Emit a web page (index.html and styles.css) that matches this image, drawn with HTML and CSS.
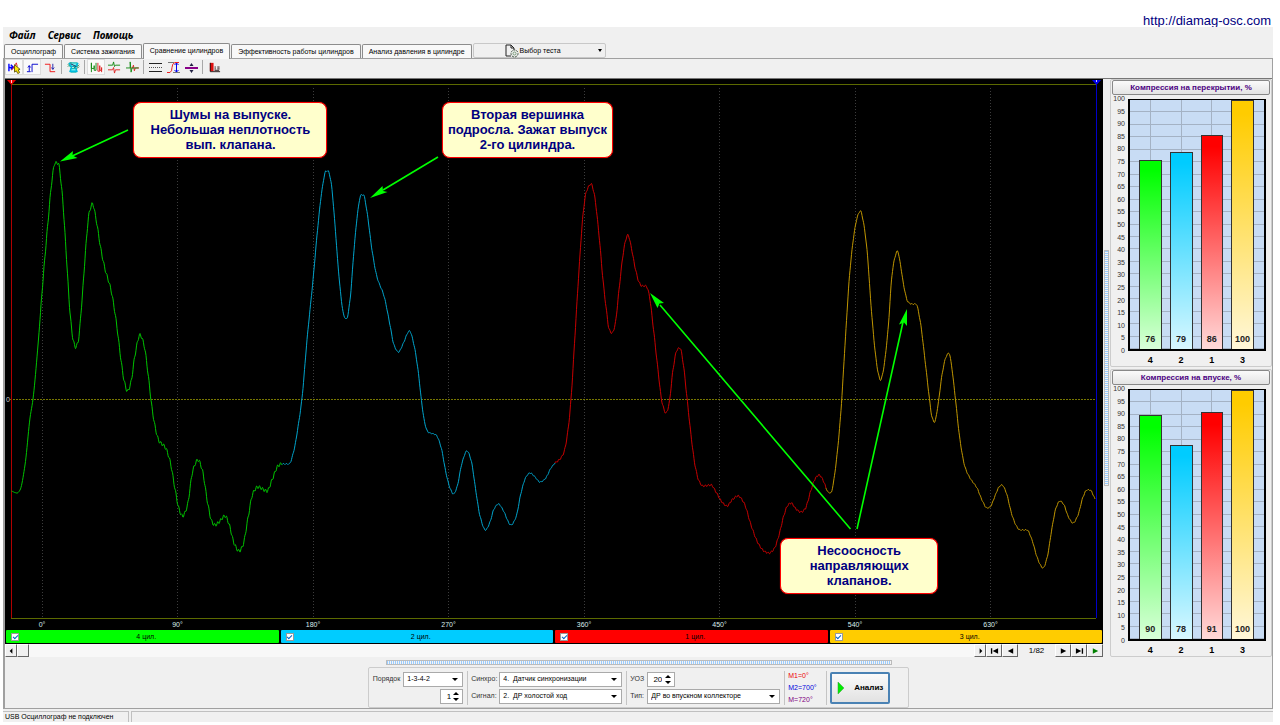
FILE: index.html
```html
<!DOCTYPE html>
<html lang="ru">
<head>
<meta charset="utf-8">
<title>Осциллограф</title>
<link rel="stylesheet" href="styles.css">
</head>
<body>
<header class="site"><a href="#site">http://diamag-osc.com</a></header>
<div class="app">
  <nav class="menu"><button>Файл</button><button>Сервис</button><button>Помощь</button></nav>
  <div class="tabs">
    <button class="tab">Осциллограф</button>
    <button class="tab">Система зажигания</button>
    <button class="tab active">Сравнение цилиндров</button>
    <button class="tab">Эффективность работы цилиндров</button>
    <button class="tab">Анализ давления в цилиндре</button>
    <button class="test-pick">
      <svg width="14" height="14" viewBox="0 0 14 14" fill="none" stroke="#222"><path d="M1 12V1h5l3 3v2M6 1v3h3M1 12h5"/><circle cx="9.500" cy="9.500" r="3.500" stroke="#3c503c" stroke-dasharray="2 1"/><circle cx="9.500" cy="9.500" r="1.500" stroke="#789a78"/></svg>
      <span>Выбор теста</span><i class="caret"></i>
    </button>
  </div>

  <div class="frame">
    <div class="toolbar">
      <button class="tool pressed" aria-label="Курсор"><svg viewBox="0 0 14 14" fill="none"><path d="M1 3v8M1 7h4M3 4l3 3-3 2" stroke="#00f" stroke-width="1.500"/><path d="M4 10l5-8 1 4" stroke="#d22"/><path d="M7 4l6 5-2 .5 1.500 3-2 1-1.500-3L7 12z" fill="#fe0" stroke="#651"/></svg></button>
      <button class="tool pressed" aria-label="Передний фронт"><svg viewBox="0 0 14 14" fill="none" stroke="#00c"><path d="M6.500 12V3.500H13M1 11.500h4"/><path d="M3.500 11V5M2 7l1.500-2L5 7"/></svg></button>
      <button class="tool" aria-label="Задний фронт"><svg viewBox="0 0 14 14" fill="none" stroke="#e11"><path d="M1 3.500h5.500v8H12"/><path d="M9.500 3v6M8 7l1.500 2L11 7" stroke="#22a"/></svg></button>
      <span class="sep"></span>
      <button class="tool" aria-label="Наложение"><svg viewBox="0 0 14 14" fill="none" stroke="#0aa"><path d="M1 4q3-4 6 0t6 0M1 6q3-4 6 0t6 0" stroke="#168040"/><path d="M3 2h8v4H3zM4 8h6v4H4z" fill="#7ee"/><path d="M2 2l3 4-2 6M12 2L9 6l2 6M4 11h6" stroke="#0bd" stroke-width="1.500"/><path d="M4 3l6 3" stroke="#225"/></svg></button>
      <span class="sep"></span>
      <button class="tool pressed" aria-label="Последовательно"><svg viewBox="0 0 14 14" fill="none"><path d="M1.500 12V2v6h3V5v5h2V2" stroke="#181"/><path d="M8.500 2v9h2V5v5h2V7v5" stroke="#d22"/></svg></button>
      <button class="tool" aria-label="Друг под другом"><svg viewBox="0 0 14 14" fill="none"><path d="M0 4.500h5L6 1l1 5 1-1.500h5" stroke="#181"/><path d="M0 9.500h5L6 7l1 6 1-3.500h5" stroke="#d22"/></svg></button>
      <button class="tool" aria-label="Совместить"><svg viewBox="0 0 14 14" fill="none"><path d="M5 7.500h2l1-3 1 6 1-3h4" stroke="#d22"/><path d="M0 7.500h4.500V1l1 11 1-4.500h7" stroke="#181"/></svg></button>
      <span class="sep"></span>
      <button class="tool" aria-label="Линии"><svg viewBox="0 0 13 13" stroke="#222"><path d="M0 2.500h13M0 10.500h13"/><path d="M0 6.500h13" stroke="#555" stroke-dasharray="1 1"/></svg></button>
      <button class="tool" aria-label="Масштаб"><svg viewBox="0 0 13 13" fill="none"><path d="M0 11.500h3q2-1 2-5t3-5h4" stroke="#e22"/><path d="M1 1.500h6M6 11.500h7" stroke="#777"/><path d="M9.500 2v9M7.500 4l2-2 2 2M7.500 9l2 2 2-2" stroke="#00e"/></svg></button>
      <button class="tool" aria-label="Ноль"><svg viewBox="0 0 13 13"><path d="M0 6h13v2H0z" fill="#808"/><path d="M6.500 2l2 3h-4zM6.500 12l2-3h-4z" fill="#224"/></svg></button>
      <span class="sep"></span>
      <button class="tool" aria-label="Отчёт"><svg viewBox="0 0 14 14"><path d="M2 2h4v9H2z" fill="#d11"/><path d="M2.500 2v9.500H13M7 6.500h1.500M7 8.500h1.500M10 6.500h2.500M10 8.500h2.500M7 10h5" fill="none" stroke="#211"/></svg></button>
    </div>

    <main class="work">
      <section class="osc">
        <div class="scope">
          <svg class="plot" viewBox="5 79 1098 550" preserveAspectRatio="none" fill="none">
            <g shape-rendering="crispEdges">
              <g stroke="#3c3c3c" stroke-dasharray="1 2"><path d="M42.500 88V618M177.500 88V618M313.500 88V618M448.500 88V618M584.500 88V618M719.500 88V618M855.500 88V618M990.500 88V618"/></g>
              <path d="M11 84.500H1096M11 618.500H1096" stroke="#5c6a00"/>
              <path d="M10 399.500H1096" stroke="#777700" stroke-dasharray="2 1"/>
              <path d="M11.500 80V618" stroke="#b00000"/>
              <path d="M1096.500 80V618" stroke="#0000c8"/>
            </g>
            <path d="M7 80h9l-4.500 5z" fill="#e00"/><path d="M1092 80h9l-4.500 5z" fill="#00e"/>
            <path d="M11.500 80v3" stroke="#fcc"/><path d="M1096.500 80v2" stroke="#ccf"/>
            <g id="traces"></g>
            <g stroke="#00ff00" stroke-width="1.600"><path d="M128 130L70 157M438 157L383 190M850.500 529L660 305M857 529L903 322"/></g>
            <g fill="#00ff00"><path d="M60 161.500l13-10.500-.5 4.500 5 2.500z"/><path d="M370 198l12.500-12 .5 5 4.500 1z"/><path d="M650 293l14 10-4.500.5-2 4.500z"/><path d="M907 309l0 17-3-3.500-5 2z"/></g>
          </svg>
          <div class="note noise">Шумы на выпуске.<br>Небольшая неплотность<br>вып. клапана.</div>
          <div class="note second">Вторая вершинка<br>подросла. Зажат выпуск<br>2-го цилиндра.</div>
          <div class="note guides">Несоосность<br>направляющих<br>клапанов.</div>
          <span class="zero">0</span>
          <div class="degrees" id="degrees"></div>
        </div>
        <div class="cylinders">
          <label class="cyl green"><input type="checkbox" checked><span>4 цил.</span></label>
          <label class="cyl blue"><input type="checkbox" checked><span>2 цил.</span></label>
          <label class="cyl red"><input type="checkbox" checked><span>1 цил.</span></label>
          <label class="cyl gold"><input type="checkbox" checked><span>3 цил.</span></label>
        </div>
        <div class="scroller">
          <button aria-label="Влево"><svg viewBox="0 0 10 8"><path d="M6 1v6L3 4z"/></svg></button><button class="thumb" aria-label="Ползунок"></button>
          <span class="track"></span>
          <button aria-label="Вправо"><svg viewBox="0 0 10 8"><path d="M4 1v6l3-3z"/></svg></button>
          <button class="wide" aria-label="Первый"><svg viewBox="0 0 10 8"><path d="M1 1h1.500v6H1zM9 1v6L3 4z"/></svg></button>
          <button class="wide" aria-label="Назад"><svg viewBox="0 0 10 8"><path d="M8 1v6L2 4z"/></svg></button>
          <output>1/82</output>
          <button class="wide" aria-label="Вперёд"><svg viewBox="0 0 10 8"><path d="M2 1v6l6-3z"/></svg></button>
          <button class="wide" aria-label="Последний"><svg viewBox="0 0 10 8"><path d="M1 1v6l6-3zM7.500 1H9v6H7.500z"/></svg></button>
          <button class="wide play" aria-label="Пуск"><svg viewBox="0 0 10 8"><path d="M2 1v6l6-3z"/></svg></button>
        </div>
      </section>
      <div class="v-split"><i></i></div>
      <aside class="charts">
        <section class="chart">
          <h2>Компрессия на перекрытии, %</h2>
          <div class="chart-body">
            <div class="scale"></div>
            <div class="bars">
              <div class="col"><div class="bar green" style="height:76%">76</div></div>
              <div class="col"><div class="bar blue" style="height:79%">79</div></div>
              <div class="col"><div class="bar red" style="height:86%">86</div></div>
              <div class="col"><div class="bar gold" style="height:100%">100</div></div>
            </div>
            <div class="names"><span>4</span><span>2</span><span>1</span><span>3</span></div>
          </div>
        </section>
        <section class="chart">
          <h2>Компрессия на впуске, %</h2>
          <div class="chart-body">
            <div class="scale"></div>
            <div class="bars">
              <div class="col"><div class="bar green" style="height:90%">90</div></div>
              <div class="col"><div class="bar blue" style="height:78%">78</div></div>
              <div class="col"><div class="bar red" style="height:91%">91</div></div>
              <div class="col"><div class="bar gold" style="height:100%">100</div></div>
            </div>
            <div class="names"><span>4</span><span>2</span><span>1</span><span>3</span></div>
          </div>
        </section>
      </aside>
    </main>

    <footer class="bottom">
      <div class="h-split"><i></i></div>
      <form class="panel">
        <div class="group order">
          <div class="row"><label for="order">Порядок</label><span class="pick"><select id="order"><option>1-3-4-2</option></select></span></div>
          <div class="row end"><span class="spin"><input type="number" value="1" aria-label="Цилиндр"></span></div>
        </div>
        <div class="group source">
          <label for="sync">Синхро:</label><span class="pick"><select id="sync"><option>4. &nbsp;Датчик синхронизации</option></select></span>
          <label for="signal">Сигнал:</label><span class="pick"><select id="signal"><option>2. &nbsp;ДР холостой ход</option></select></span>
        </div>
        <div class="group kind">
          <label for="uoz">УОЗ</label><span class="spin"><input id="uoz" type="number" value="20"></span>
          <label for="type">Тип:</label><span class="pick"><select id="type"><option>ДР во впускном коллекторе</option></select></span>
        </div>
        <div class="group marks"><span class="m1">M1=0°</span><span class="m2">M2=700°</span><span class="m3">M=720°</span></div>
        <div class="group"><button type="button" class="run"><svg width="8" height="14" viewBox="0 0 8 14"><path d="M1 1l6 6-6 6z" fill="#0e0" stroke="#393" stroke-width=".5"/></svg><span>Анализ</span></button></div>
      </form>
    </footer>
  </div>
  <div class="status"><span>USB Осциллограф не подключен</span><span></span></div>
</div>
<script src="traces.js"></script>
</body>
</html>
```
FILE: traces.js
```js
// Recorded pressure curves: [x, y] key points, colour and ripple height per cylinder.
const traces = [
  { color: '#00c400', ripple: 1.6, d: '11.5,491 17,493 20,490 25,465 30,418 33,399 38,345 43,280 48,222 52,180 55,163 58,163 62,192 66,250 70,312 73,339 75.5,347 78,342 82,300 86,245 89,214 92.5,204 96,219 101,250 105,269 111,290 116,320 121,360 124,380 127.5,391 131,382 135,355 140,335 144,345 149,382 152,408 156,431 159,441 165,447 170,461 175,489 179,509 182.5,516 187,507 193,470 198,460 202,469 208,505 212,522 215,525 219,522 225,516 229,524 234,543 239,551 243,545 248,518 253,493 258,487 267,491 272,480 278,466 282,463.5' },
  { color: '#00a4cc', ripple: 0.5, d: '282,464 289,464 294,450 298,427 302,398 307,340 313,280 318,225 322,190 326,171 328,171 331,182 335,225 338,265 342,305 344,316 346.5,319 350,300 354,250 358,210 361,195 363.5,195 367,212 372,250 377,277 384,296 390,325 394,345 398.5,352 403,344 409.5,331 414,345 418,370 422,405 425,424 428,432 436,435 441,447 446,473 450,488 453.5,494 457,487 462,463 467,451 471,460 476,492 480,516 485.5,530 490,522 494,509 498.5,504 503,510 511,525 516,517 521,493 526,477 530,473 535,477 540,482 545,479 551,468 555,463' },
  { color: '#c80000', ripple: 0.9, d: '555,463 560,459 564,452 568,430 571,399 575,335 579,270 583,215 586,193 589,186 591,184 594,193 599,235 603,280 607,315 609,329 612,333 615,325 619,290 623,255 626,239 628,235 631,246 635,267 639,282 642,286 646,286 649,294 653,325 658,370 662,402 666,413 669,404 673,370 677,350 680,348 683,362 687,398 691,435 695,465 699,481 703,486 711,485 716,492 722,502 727,506 732,500 738,496 744,503 751,525 758,543 764,551 769,553 774,549 779,535 784,515 788,505 791,503 796,509 801,512 805,509 811,490 815,479 819,475 823,480 826,488' },
  { color: '#c09600', ripple: 0.5, d: '826,488 828,492 831,493 833,485 837,455 841,410 845,345 850,270 855,228 858,215 860.5,211 863,220 867,250 871,305 875,350 878,372 880.5,380 883,372 888,330 892,275 895,257 897.5,251 900,262 904,287 908,302 912,304 916,304 920,320 925,360 929,395 932,417 934.5,422 938,405 942,375 946,357 949,353 951,362 955,395 960,440 965,467 970,478 977,488 982,500 987,508 990,507 995,496 999,487 1002,485 1006,492 1012,515 1017,527 1020,530 1027,530 1032,540 1037,557 1041,566 1043,568 1047,558 1052,528 1056,508 1060,501 1064,505 1068,516 1073,523 1078,515 1083,497 1087,490 1090,490 1095,499' }
];

// Monotone cubic interpolation keeps the peaks at their key points.
function curve(text, ripple) {
  const p = text.split(' ').map(s => s.split(',').map(Number));
  const slope = p.slice(1).map((q, i) => (q[1] - p[i][1]) / (q[0] - p[i][0]));
  const m = p.map((q, i) => {
    const a = slope[i - 1], b = slope[i];
    if (a === undefined) return b;
    if (b === undefined) return a;
    return a * b <= 0 ? 0 : 2 * a * b / (a + b);
  });
  let out = '', i = 0;
  for (let x = p[0][0]; x <= p[p.length - 1][0]; x += 0.5) {
    while (i < p.length - 2 && x > p[i + 1][0]) i++;
    const h = p[i + 1][0] - p[i][0], t = (x - p[i][0]) / h;
    const y = (2 * t ** 3 - 3 * t ** 2 + 1) * p[i][1] + (t ** 3 - 2 * t ** 2 + t) * h * m[i]
      + (3 * t ** 2 - 2 * t ** 3) * p[i + 1][1] + (t ** 3 - t ** 2) * h * m[i + 1];
    const r = x > 40 ? ripple * Math.sin(x * 2.1) : 0;
    out += (out ? 'L' : 'M') + x + ' ' + (y + r).toFixed(1);
  }
  return out;
}

const group = document.getElementById('traces');
for (const t of traces) {
  const path = document.createElementNS('http://www.w3.org/2000/svg', 'path');
  path.setAttribute('d', curve(t.d, t.ripple));
  path.setAttribute('stroke', t.color);
  group.append(path);
}

const degrees = document.getElementById('degrees');
for (let k = 0; k < 8; k++) {
  const s = document.createElement('span');
  s.textContent = k * 90 + '°';
  s.style.left = (37 + k * 135.5) / 10.98 + '%';
  degrees.append(s);
}

for (const scale of document.querySelectorAll('.scale')) {
  for (let v = 100; v >= 0; v -= 5) {
    const s = document.createElement('span');
    s.textContent = v;
    scale.append(s);
  }
}
```
FILE: styles.css
```css
* { box-sizing: border-box; }
body { margin: 0; min-height: 100vh; display: flex; flex-direction: column; background: #fff; color: #000; font: 7px/10px "Liberation Sans", Arial, sans-serif; }
button, input, select { font: inherit; color: inherit; margin: 0; padding: 0; border: 0; background: none; border-radius: 0; }
a { color: inherit; text-decoration: none; }
.site { height: 27px; padding: 13px 9px 0 0; text-align: right; font-size: 13px; line-height: 16px; color: #000080; }
.app { flex: 1; display: flex; flex-direction: column; margin: 0 7px 3px 3px; background: #f0f0f0; }
.menu { display: flex; gap: 12px; height: 16px; padding: 0 6px; font: italic bold 10px/15px "Noto Sans", sans-serif; }
.tabs { display: flex; align-items: flex-end; gap: 1px; height: 15px; padding-left: 1px; }
.tab { height: 14px; padding: 0 6px; background: #f8f8f8; border: 1px solid #8c8c8c; border-bottom: 0; border-radius: 2px 2px 0 0; white-space: nowrap; }
.tab.active { height: 16px; margin-bottom: -1px; padding-bottom: 1px; background: #f8f8f8; position: relative; z-index: 1; }
.test-pick { display: flex; align-items: center; width: 133px; height: 15px; padding: 0 3px 0 31px; border: 1px solid #c8c8c8; border-radius: 2px; gap: 1px; }
.test-pick .caret { margin-left: auto; }
.caret { border: 2px solid transparent; border-top: 3px solid #000; border-bottom: 0; }
.frame { flex: 1; display: flex; flex-direction: column; border: 1px solid #a0a0a0; border-left-width: 2px; }
.toolbar { display: flex; align-items: center; height: 20px; padding-bottom: 3px; border-bottom: 1px solid #777; }
.tool { display: flex; align-items: center; justify-content: center; width: 18px; height: 16px; }
.tool svg { width: 13px; height: 13px; }
.tool.pressed { background: #fafafa; border: 1px solid #ddd; }
.tool.pressed svg { flex: none; }
.sep { width: 1px; height: 14px; margin: 0 2px; background: #a8a8a8; }
.work { flex: 1; display: grid; grid-template-columns: 1fr 7px 162px; min-height: 400px; }
.osc { display: flex; flex-direction: column; min-width: 0; }
.scope { position: relative; flex: 1; background: #000; }
.plot { position: absolute; inset: 0; width: 100%; height: 100%; }
.note { position: absolute; padding: 4px 0 5px; border: 1px solid #f00; border-radius: 8px; background: #ffc; color: #000080; text-align: center; font-size: 13px; font-weight: bold; line-height: 15px; white-space: nowrap; box-shadow: 0 0 1px #f00; }
.noise { left: 11.7%; top: 4.1%; width: 194px; }
.second { left: 39.8%; top: 4.1%; width: 171px; }
.guides { left: 70.6%; top: 83.4%; width: 158px; }
.zero { position: absolute; left: 1px; top: 57.4%; color: #ccc; line-height: 9px; }
.degrees span { position: absolute; bottom: -1px; transform: translateX(-50%); color: #d8ecec; }
.cylinders { display: grid; grid-template-columns: repeat(4, 1fr); gap: 2px; padding: 1px; background: #000; }
.cyl { display: flex; align-items: center; height: 13px; padding: 0 5px; border-radius: 1px; }
.cyl span { flex: 1; text-align: center; }
.cyl input { appearance: none; width: 8px; height: 8px; background: #fff; border: 1px solid #999; display: grid; place-items: center; }
.cyl input:checked::after { content: ""; width: 4px; height: 2px; border: solid #06c; border-width: 0 0 1px 1px; transform: rotate(-45deg); }
.green { background: #0f0; } .blue { background: #0cf; } .red { background: #f00; } .gold { background: #fc0; }
.scroller { display: flex; height: 13px; background: #f8f8f8; }
.scroller button { width: 12px; background: #f0f0f0; border: 1px solid #fff; border-right-color: #666; border-bottom-color: #666; display: grid; place-items: center; }
.scroller .wide { width: 16px; }
.scroller svg { width: 9px; height: 8px; }
.scroller .play svg { fill: #008000; }
.track { flex: 1; }
.scroller output { width: 37px; text-align: center; font-size: 8px; line-height: 13px; background: #f0f0f0; }
.v-split { display: flex; align-items: center; justify-content: center; }
.v-split i { width: 5px; height: 41%; border: 1px solid #bbb; background: repeating-linear-gradient(#9cf 0 1px, #f4f4f4 1px 2px); }
.charts { display: grid; grid-template-rows: 1fr 1fr; gap: 2px; }
.chart { display: flex; flex-direction: column; padding: 0 1px; border: 1px solid #ccc; border-radius: 2px; }
.chart h2 { margin: 0; height: 15px; border: 1px solid #888; border-radius: 2px; background: linear-gradient(#fafafa, #e4e4e4); color: #4b0082; text-align: center; font-size: 8px; line-height: 13px; }
.chart-body { flex: 1; display: grid; grid-template-columns: 16px 1fr; grid-template-rows: 1fr 15px; padding: 4px 4px 0 0; }
.scale { display: flex; flex-direction: column; justify-content: space-between; margin: -5px 0; padding-right: 3px; text-align: right; white-space: nowrap; color: #333; }
.scale span { height: 10px; }
.bars { display: grid; grid-template-columns: repeat(4, 1fr); gap: 8px; padding: 0 10px 0 9px; border: 1px solid #000; border-width: 1px 2px 2px; background: repeating-linear-gradient(to top, #a4b2c4 0 1px, transparent 1px 5%), #c8dcf4; }
.col { display: flex; align-items: flex-end; background: linear-gradient(#a4b2c4, #a4b2c4) center / 1px 100% no-repeat; }
.bar { flex: 1; display: flex; align-items: flex-end; justify-content: center; padding-bottom: 5px; border: 1px solid #333; border-bottom: 0; color: #222; font-size: 9px; font-weight: bold; background-image: linear-gradient(rgba(255,255,255,0) 5%, rgba(255,255,255,.85)); }
.names { grid-column: 2; display: grid; grid-template-columns: repeat(4, 1fr); gap: 8px; padding: 4px 12px 0 11px; text-align: center; font-size: 9px; font-weight: bold; }
.bottom { display: flex; flex-direction: column; align-items: center; height: 51px; padding-top: 3px; }
.h-split { width: 506px; height: 5px; border: 1px solid #bbb; }
.h-split i { display: block; height: 3px; background: repeating-linear-gradient(90deg, #9cf 0 1px, #f4f4f4 1px 2px); }
.panel { display: flex; align-items: center; height: 41px; margin-top: 2px; padding: 0 18px 0 4px; border: 1px solid #ccc; border-radius: 2px; color: #000; }
.panel label { color: #333; }
.group { height: 34px; align-content: center; }
.group + .group { margin-left: 4px; padding-left: 3px; border-left: 1px solid #c4c4c4; }
.order { display: flex; flex-direction: column; justify-content: center; gap: 2px; }
.row { display: flex; align-items: center; justify-content: space-between; gap: 3px; }
.row.end { justify-content: flex-end; }
.order .pick { width: 60px; }
.source, .kind { display: grid; grid-template-columns: 28px 123px; align-items: center; row-gap: 2px; }
.kind { grid-template-columns: 17px 133px; }
.pick, .spin { position: relative; display: block; height: 15px; border: 1px solid #aaa; background: #fff; }
.spin { width: 28px; }
.pick select, .spin input { appearance: none; width: 100%; height: 13px; padding-left: 3px; display: block; outline: 0; }
.spin input { appearance: textfield; width: 14px; text-align: right; padding: 0; font-size: 8px; }
.spin input::-webkit-inner-spin-button { appearance: none; margin: 0; }
.order .spin { width: 23px; } .order .spin input { width: 10px; }
.pick::after, .spin::after, .spin::before { content: ""; position: absolute; right: 4px; top: 5px; border: 3px solid transparent; border-top-color: #000; border-bottom: 0; pointer-events: none; }
.spin::after { right: 3px; top: 8px; }
.spin::before { right: 3px; top: 2px; border-top: 0; border-bottom: 3px solid #000; }
.marks { display: flex; flex-direction: column; justify-content: space-between; width: 38px; }
.m1 { color: #e00; } .m2 { color: #00d; } .m3 { color: #800080; }
.run { display: flex; align-items: center; gap: 9px; width: 60px; height: 32px; padding: 0 5px; border: 2px solid #4a82b4; border-radius: 2px; background: linear-gradient(#fafafa, #e2e2e2); font-weight: bold; font-size: 8px; }
.status { display: flex; gap: 2px; height: 13px; padding-top: 2px; }
.status span { width: 126px; padding-left: 2px; border: 1px solid #c0c0c0; border-width: 1px 1px 0 0; white-space: nowrap; }
.status span + span { flex: 1; border-width: 1px 0 0 1px; }
```
